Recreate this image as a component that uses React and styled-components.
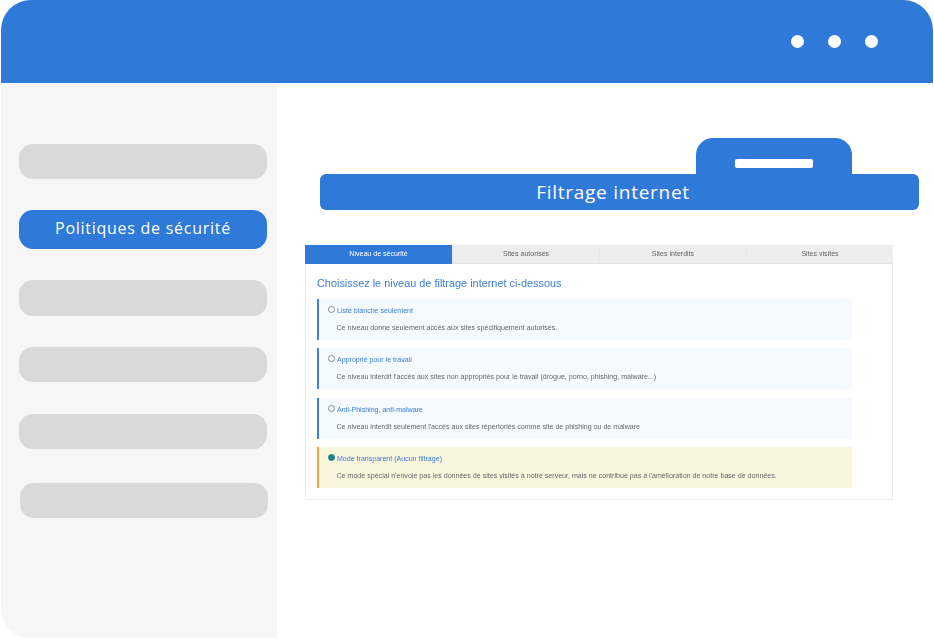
import React from "react";
import styled, { createGlobalStyle } from "styled-components";

const Global = createGlobalStyle`
  html, body { margin: 0; padding: 0; background: #fff; }
  #root { width: 934px; height: 639px; overflow: hidden; }
`;

const BLUE = "#2f79d8";

const Win = styled.div`
  width: 932px; height: 638px; margin-left: 1px;
  border-radius: 30px; overflow: hidden; background: #fff;
  display: flex; flex-direction: column;
`;
const Header = styled.header`
  height: 83px; flex: none; background: ${BLUE};
  display: flex; justify-content: flex-end; align-items: flex-start; gap: 24px;
  padding: 35px 55px 0 0; box-sizing: border-box;
`;
const Dot = styled.span`width: 13px; height: 13px; border-radius: 50%; background: #fff;`;
const Body = styled.div`flex: 1; display: flex; min-height: 0;`;
const Side = styled.aside`
  width: 276px; flex: none; background: #f6f6f6; box-sizing: border-box;
  padding: 61px 0 0 18px; display: flex; flex-direction: column; gap: 31px;
`;
const Pill = styled.div`
  width: 248px; height: ${p => p.$h || 35}px; border-radius: 14px;
  margin-left: ${p => p.$x || 0}px; margin-top: ${p => p.$mt || 0}px;
  background: ${p => (p.$active ? BLUE : "#d9d9d9")}; color: #fff;
  display: flex; align-items: center; justify-content: center;
  padding-bottom: ${p => (p.$active ? 3 : 0)}px; box-sizing: border-box;
  font: 400 16px "Open Sans", sans-serif; letter-spacing: 0.73px;
`;
const Main = styled.main`flex: 1; min-width: 0; padding: 55px 0 0 28px; box-sizing: border-box;`;
const TitleBlock = styled.div`
  width: 599px; margin-left: 15px; display: flex; flex-direction: column;
`;
const Handle = styled.div`
  width: 156px; height: 36px; margin-left: 376px; background: ${BLUE};
  border-radius: 17px 17px 0 0; display: flex; justify-content: center; padding-top: 21px;
  box-sizing: border-box;
`;
const HandleSlot = styled.span`width: 78px; height: 9px; background: #fff; border-radius: 2px;`;
const TitleBar = styled.h1`
  margin: 0; height: 36px; border-radius: 6px; background: ${BLUE}; color: #fff;
  display: flex; align-items: center; justify-content: center; box-sizing: border-box;
  font: 400 19px "Open Sans", sans-serif; letter-spacing: 0.74px; padding-right: 13px;
`;
const Panel = styled.section`
  width: 588px; height: 255px; margin-top: 35px; box-sizing: border-box; background: #fff;
  border: solid #ececec; border-width: 0 1px 1.5px 1px; font-family: "Liberation Sans", Arial, sans-serif;
  filter: blur(0.3px);
`;
const Tabs = styled.nav`display: grid; grid-template-columns: repeat(4, 1fr); height: 19px; margin: 0 -1px 0 -1px;`;
const Tab = styled.div`
  display: flex; align-items: center; justify-content: center; font-size: 7.05px;
  padding-bottom: 1px; box-sizing: border-box;
  background: ${p => (p.$active ? BLUE : "#ededed")};
  color: ${p => (p.$active ? "#fff" : "#666")};
  border-bottom: 1px solid ${p => (p.$active ? BLUE : "#e4e4e4")};
  border-left: ${p => (p.$first ? "0" : "1px solid #e8e8e8")};
`;
const Content = styled.div`padding: 12px 0 0 11px;`;
const Heading = styled.h2`
  margin: 0 0 8px; font-size: 10.9px; line-height: 15px; font-weight: 400; color: #3a7fd5;
`;
const Options = styled.div`display: flex; flex-direction: column; gap: 8px; width: 535px;`;
const Option = styled.div`
  height: 41px; box-sizing: border-box; padding: 6px 0 0 9px;
  margin-top: ${p => p.$mt || 0}px;
  border-left: 2px solid ${p => (p.$on ? "#f5a93b" : "#3b7fe0")};
  background: ${p => (p.$on ? "#faf5dd" : "#f4fafe")};
`;
const Label = styled.div`
  display: flex; align-items: center; gap: 2px; height: 11px;
  font-size: 7.05px; color: #3a7fd5;
`;
const Radio = styled.span`
  width: 7px; height: 7px; box-sizing: border-box; border-radius: 50%; flex: none;
  border: 1px solid ${p => (p.$on ? "#1f7f8f" : "#888")};
  background: ${p => (p.$on ? "#1f7f8f" : "#fff")};
  margin-top: -2px;
`;
const Desc = styled.p`
  margin: 7px 0 0 8.5px; font-size: 7.08px; line-height: 11px; color: #666; white-space: nowrap;
`;

const options = [
  ["Liste blanche seulement", "Ce niveau donne seulement accès aux sites spécifiquement autorisés."],
  ["Approprié pour le travail", "Ce niveau interdit l'accès aux sites non appropriés pour le travail (drogue, porno, phishing, malware...)"],
  ["Anti-Phishing, anti-malware", "Ce niveau interdit seulement l'accès aux sites répertoriés comme site de phishing ou de malware", false, 1],
  ["Mode transparent (Aucun filtrage)", "Ce mode spécial n'envoie pas les données de sites visités à notre serveur, mais ne contribue pas à l'amélioration de notre base de données.", true],
];

export default function App() {
  return (
    <Win>
      <Global />
      <Header><Dot /><Dot /><Dot /></Header>
      <Body>
        <Side>
          <Pill />
          <Pill $active $h={39}>Politiques de sécurité</Pill>
          <Pill $h={36} />
          <Pill />
          <Pill $mt={1} />
          <Pill $mt={3} $x={1} />
        </Side>
        <Main>
          <TitleBlock>
            <Handle><HandleSlot /></Handle>
            <TitleBar>Filtrage internet</TitleBar>
          </TitleBlock>
          <Panel>
            <Tabs>
              <Tab $active $first>Niveau de sécurité</Tab>
              <Tab>Sites autorisés</Tab>
              <Tab>Sites interdits</Tab>
              <Tab>Sites visités</Tab>
            </Tabs>
            <Content>
              <Heading>Choisissez le niveau de filtrage internet ci-dessous</Heading>
              <Options>
                {options.map(([l, d, on, mt]) => (
                  <Option key={l} $on={on} $mt={mt}>
                    <Label><Radio $on={on} />{l}</Label>
                    <Desc>{d}</Desc>
                  </Option>
                ))}
              </Options>
            </Content>
          </Panel>
        </Main>
      </Body>
    </Win>
  );
}
